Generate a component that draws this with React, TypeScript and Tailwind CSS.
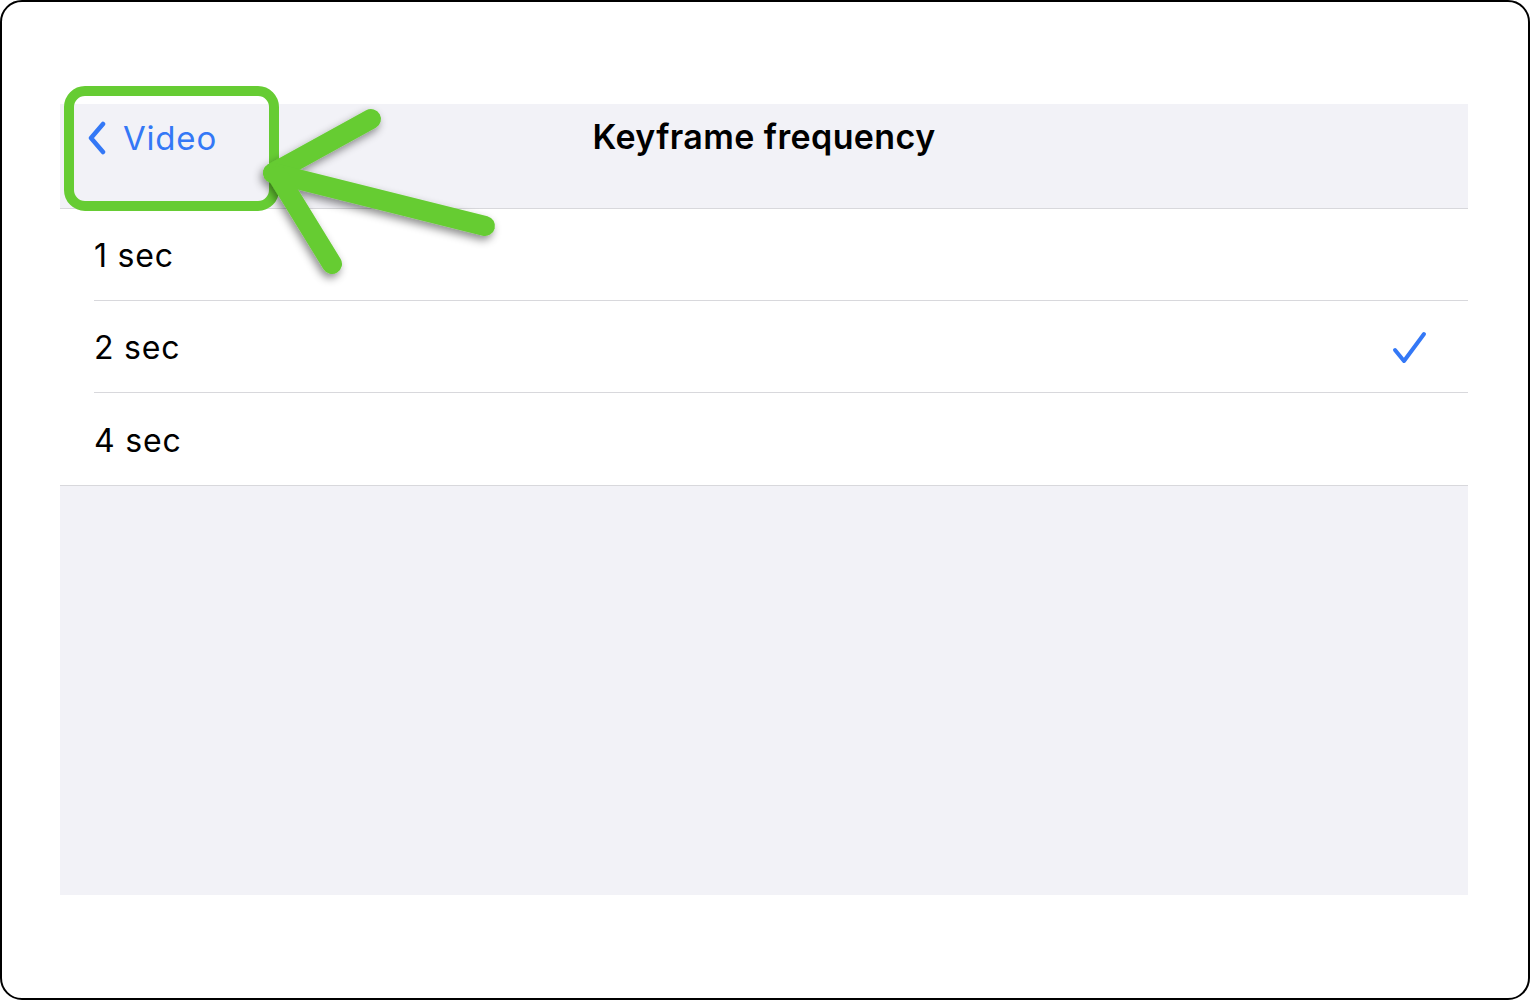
import React from "react";

export default function App() {
  const rows = [
    { label: "1 sec", checked: false },
    { label: "2 sec", checked: true },
    { label: "4 sec", checked: false },
  ];
  return (
    <div className="w-[1530px] h-[1000px] bg-white" style={{ fontFamily: "Inter, 'Liberation Sans', sans-serif" }}>
      <div className="relative w-full h-full border-2 border-black rounded-[22px] bg-white pt-[102px] px-[58px]">
        <div className="w-[1408px] h-[791px] bg-[#f2f2f7] flex flex-col">
          <div className="relative h-[105px] border-b border-[#d8d8dc]">
            <div className="absolute left-[26px] top-[14px] flex items-center gap-[15px] text-[#3478f6]">
              <svg width="22" height="34" viewBox="0 0 22 34" fill="none">
                <path d="M17 3 L5 17 L17 31" stroke="#3478f6" strokeWidth="4.5" strokeLinecap="round" strokeLinejoin="round" />
              </svg>
              <span className="text-[33px] leading-[40px] tracking-[0.8px]">Video</span>
            </div>
            <div className="h-[64px] flex items-center justify-center">
              <span className="text-[34px] font-semibold text-black tracking-[0.4px]">Keyframe frequency</span>
            </div>
          </div>
          <div className="bg-white border-b border-[#d8d8dc]">
            {rows.map((r, i) => (
              <div key={r.label} className="pl-[34px]">
                <div className={`h-[92px] flex items-center justify-between pr-[40px] ${i < rows.length - 1 ? "border-b border-[#d8d8dc]" : ""}`}>
                  <span className="text-[32px] text-black tracking-[0.8px] pt-[3px]">{r.label}</span>
                  {r.checked && (
                    <svg width="36" height="34" viewBox="0 0 36 34" fill="none" className="mt-[3px]">
                      <path d="M3 19 L12 30 L32 3" stroke="#3478f6" strokeWidth="4" strokeLinecap="round" strokeLinejoin="round" />
                    </svg>
                  )}
                </div>
              </div>
            ))}
          </div>
          <div className="flex-1" />
        </div>
        <svg className="absolute left-0 top-0 pointer-events-none" width="1530" height="1000" viewBox="0 0 1530 1000">
          <defs>
            <filter id="sh" x="-20%" y="-20%" width="140%" height="140%">
              <feDropShadow dx="-2" dy="4" stdDeviation="4" floodColor="#000" floodOpacity="0.45" />
            </filter>
          </defs>
          <rect x="67" y="89" width="205" height="115" rx="16" ry="16" fill="none" stroke="#66cc33" strokeWidth="10" />
          <g filter="url(#sh)" stroke="#66cc33" strokeWidth="20" strokeLinecap="round" fill="none">
            <line x1="369" y1="117" x2="271" y2="171" />
            <line x1="271" y1="171" x2="483" y2="224" />
            <line x1="276" y1="174" x2="330" y2="262" />
          </g>
        </svg>
      </div>
    </div>
  );
}
